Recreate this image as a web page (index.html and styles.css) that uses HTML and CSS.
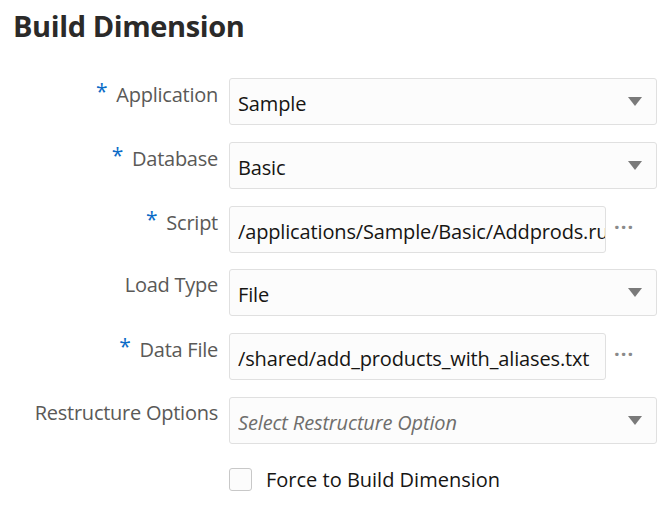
FILE: index.html
```html
<!DOCTYPE html>
<html lang="en">
<head>
<meta charset="utf-8">
<title>Build Dimension</title>
<link rel="stylesheet" href="styles.css">
</head>
<body>
<div class="page">
  <h1 class="title">Build Dimension</h1>
  <div class="form">
    <div class="row">
      <label class="label"><span class="req">*</span>Application</label>
      <div class="field select"><span class="value">Sample</span><span class="caret"></span></div>
    </div>
    <div class="row">
      <label class="label"><span class="req">*</span>Database</label>
      <div class="field select"><span class="value">Basic</span><span class="caret"></span></div>
    </div>
    <div class="row">
      <label class="label"><span class="req">*</span>Script</label>
      <div class="with-more">
        <div class="field text"><span class="value">/applications/Sample/Basic/Addprods.rul</span></div>
        <span class="more">&middot;&middot;&middot;</span>
      </div>
    </div>
    <div class="row">
      <label class="label">Load Type</label>
      <div class="field select"><span class="value">File</span><span class="caret"></span></div>
    </div>
    <div class="row">
      <label class="label"><span class="req">*</span>Data File</label>
      <div class="with-more">
        <div class="field text"><span class="value">/shared/add_products_with_aliases.txt</span></div>
        <span class="more">&middot;&middot;&middot;</span>
      </div>
    </div>
    <div class="row">
      <label class="label">Restructure Options</label>
      <div class="field select"><span class="value placeholder">Select Restructure Option</span><span class="caret"></span></div>
    </div>
    <div class="row check-row">
      <span class="label"></span>
      <label class="check"><span class="box"></span><span class="check-text">Force to Build Dimension</span></label>
    </div>
  </div>
</div>
</body>
</html>
```
FILE: styles.css
```css
html, body {
  margin: 0;
  padding: 0;
  background: #ffffff;
}
body {
  font-family: "Open Sans", "Noto Sans", sans-serif;
  color: #161513;
}
.page {
  padding: 6px 8px 0 13px;
}
.title {
  margin: 0;
  font-size: 29px;
  font-weight: 700;
  line-height: 40px;
  color: #2b2a29;
  letter-spacing: -0.4px;
}
.form {
  margin-top: 32px;
  display: flex;
  flex-direction: column;
  gap: 16.8px;
}
.row {
  display: grid;
  grid-template-columns: 205px 1fr;
  column-gap: 11px;
  align-items: start;
}
.label {
  text-align: right;
  font-size: 20px;
  line-height: 26px;
  padding-top: 3px;
  color: #5a5957;
  letter-spacing: -0.25px;
  white-space: nowrap;
}
.req {
  color: #0b6bc7;
  margin-right: 9px;
  font-size: 21px;
  position: relative;
  top: -3px;
}
.field {
  box-sizing: border-box;
  height: 47px;
  border: 1px solid #e0e0e0;
  border-radius: 3px;
  background: #fcfcfc;
  display: flex;
  align-items: center;
  padding: 4px 14px 0 8px;
  font-size: 20px;
  letter-spacing: -0.15px;
  overflow: hidden;
}
.value {
  flex: 1;
  min-width: 0;
  white-space: nowrap;
  overflow: hidden;
}
.placeholder {
  font-style: italic;
  color: #6f6e6c;
}
.caret {
  width: 0;
  height: 0;
  border-left: 7px solid transparent;
  border-right: 7px solid transparent;
  border-top: 9px solid #7a7a7a;
  margin-top: -4px;
}
.with-more {
  display: flex;
  align-items: center;
  gap: 8px;
}
.with-more .field {
  width: 377px;
  flex: none;
  padding-right: 0;
}
.more {
  color: #8a8a8a;
  font-size: 20px;
  letter-spacing: 1px;
  font-weight: 700;
  margin-top: -6px;
}
.check-row {
  margin-top: 5px;
}
.check {
  display: flex;
  align-items: center;
  gap: 14px;
}
.box {
  box-sizing: border-box;
  width: 23px;
  height: 23px;
  border: 1px solid #c8c8c8;
  border-radius: 3px;
  background: #fcfcfc;
}
.check-text {
  font-size: 20px;
  color: #161513;
}
```
